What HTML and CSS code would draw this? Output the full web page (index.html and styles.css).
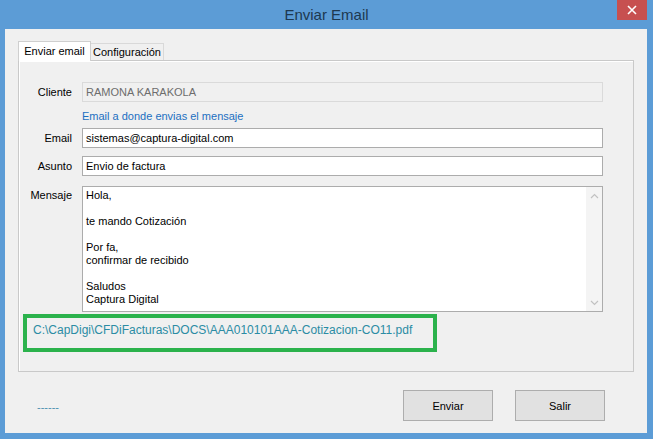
FILE: index.html
```html
<!DOCTYPE html>
<html lang="es">
<head>
    <meta charset="UTF-8">
    <title>Enviar Email</title>
    <link rel="stylesheet" href="styles.css">
</head>
<body>
    <div class="window">
        <div class="titlebar">
            <div class="titlebar-side"></div>
            <div class="title">Enviar Email</div>
            <div class="titlebar-side right">
                <div class="close-btn">
                    <svg width="10" height="10" viewBox="0 0 10 10">
                        <path d="M1 1 L9 9 M9 1 L1 9" stroke="#fff" stroke-width="1.6" fill="none"/>
                    </svg>
                </div>
            </div>
        </div>

        <div class="client">
            <div class="tabs">
                <div class="tab active">Enviar email</div>
                <div class="tab">Configuración</div>
            </div>

            <div class="panel">
                <div class="field">
                    <label>Cliente</label>
                    <div class="textbox disabled">RAMONA KARAKOLA</div>
                </div>

                <div class="field link-row">
                    <label></label>
                    <span class="link">Email a donde envias el mensaje</span>
                </div>

                <div class="field">
                    <label>Email</label>
                    <div class="textbox">sistemas@captura-digital.com</div>
                </div>

                <div class="field asunto">
                    <label>Asunto</label>
                    <div class="textbox">Envio de factura</div>
                </div>

                <div class="field mensaje">
                    <label>Mensaje</label>
                    <div class="textarea">
                        <div class="textarea-text">Hola,

te mando Cotización

Por fa,
confirmar de recibido

Saludos
Captura Digital</div>
                        <div class="scrollbar">
                            <svg width="9" height="6" viewBox="0 0 9 6">
                                <path d="M1 5 L4.5 1.5 L8 5" stroke="#c2c2c2" stroke-width="1.2" fill="none"/>
                            </svg>
                            <svg width="9" height="6" viewBox="0 0 9 6">
                                <path d="M1 1 L4.5 4.5 L8 1" stroke="#c2c2c2" stroke-width="1.2" fill="none"/>
                            </svg>
                        </div>
                    </div>
                </div>

                <div class="attachment">C:\CapDigi\CFDiFacturas\DOCS\AAA010101AAA-Cotizacion-CO11.pdf</div>
            </div>

            <div class="footer">
                <span class="status">------</span>
                <div class="buttons">
                    <button type="button">Enviar</button>
                    <button type="button">Salir</button>
                </div>
            </div>
        </div>
    </div>
</body>
</html>
```

FILE: styles.css
```css
/* General */
* {
    margin: 0;
    padding: 0;
    box-sizing: border-box;
}

body {
    font-family: "Liberation Sans", Arial, sans-serif;
    font-size: 11px;
    color: #000;
    background-color: #5c9cd6;
    width: 653px;
    height: 439px;
    overflow: hidden;
}

.window {
    height: 439px;
    display: flex;
    flex-direction: column;
}

/* Barra de titulo */
.titlebar {
    height: 29px;
    display: flex;
}

.titlebar-side {
    width: 36px;
}

.titlebar-side.right {
    display: flex;
}

.title {
    flex: 1;
    text-align: center;
    font-size: 15px;
    color: #1d3850;
    padding-top: 6px;
}

.close-btn {
    width: 30px;
    height: 20px;
    background-color: #c75050;
    display: flex;
    align-items: center;
    justify-content: center;
}

/* Area cliente */
.client {
    flex: 1;
    margin: 0 6px 6px 5px;
    background-color: #f0f0f0;
    padding: 12px 13px 0 13px;
    display: flex;
    flex-direction: column;
}

/* Pestañas */
.tabs {
    display: flex;
    align-items: flex-end;
    height: 19px;
    padding-left: 0;
}

.tab {
    width: 73px;
    height: 17px;
    border: 1px solid #d9d9d9;
    border-bottom: none;
    background-color: #f0f0f0;
    text-align: center;
    line-height: 16px;
}

.tab.active {
    height: 20px;
    margin-bottom: -1px;
    background-color: #fff;
    border-color: #cfcfcf;
    line-height: 18px;
    position: relative;
    z-index: 1;
}

.tab + .tab {
    border-left: none;
}

.panel {
    height: 312px;
    border: 1px solid #c9c9c9;
    box-shadow: inset 1px 1px 0 #fff;
    padding-top: 21px;
}

/* Campos */
.field {
    display: flex;
    align-items: center;
}

.field label {
    width: 53px;
    margin-right: 10px;
    text-align: right;
}

.textbox {
    width: 521px;
    height: 20px;
    border: 1px solid #acacac;
    background-color: #fff;
    padding: 0 3px;
    line-height: 18px;
}

.textbox.disabled {
    background-color: #f0f0f0;
    border-color: #dadada;
    color: #6d6d6d;
}

.link-row {
    height: 26px;
    padding-top: 1px;
}

.link {
    color: #1c6fc1;
}

.asunto {
    margin-top: 8px;
}

.mensaje {
    margin-top: 10px;
    align-items: flex-start;
}

.mensaje label {
    padding-top: 3px;
}

.textarea {
    width: 521px;
    height: 126px;
    border: 1px solid #acacac;
    background-color: #fff;
    display: flex;
}

.textarea-text {
    flex: 1;
    white-space: pre-line;
    line-height: 13px;
    padding: 2px 3px;
}

.scrollbar {
    width: 16px;
    background-color: #f4f4f4;
    display: flex;
    flex-direction: column;
    justify-content: space-between;
    align-items: center;
    padding: 6px 0 5px;
}

/* Adjunto */
.attachment {
    width: 414px;
    height: 38px;
    margin: 2px 0 0 4px;
    border: 4px solid #2bb24c;
    color: #2b8ca4;
    font-size: 12px;
    line-height: 16px;
    padding: 4px 0 0 6px;
    white-space: nowrap;
}

/* Pie */
.footer {
    display: flex;
    align-items: flex-start;
    padding-top: 18px;
}

.status {
    color: #4a8fb0;
    margin: 11px 0 0 19px;
}

.buttons {
    margin-left: auto;
    margin-right: 29px;
    display: flex;
    gap: 22px;
}

.buttons button {
    width: 90px;
    height: 31px;
    font-family: "Liberation Sans", Arial, sans-serif;
    font-size: 11px;
    color: #000;
    background-color: #e1e1e1;
    border: 1px solid #adadad;
}
```
